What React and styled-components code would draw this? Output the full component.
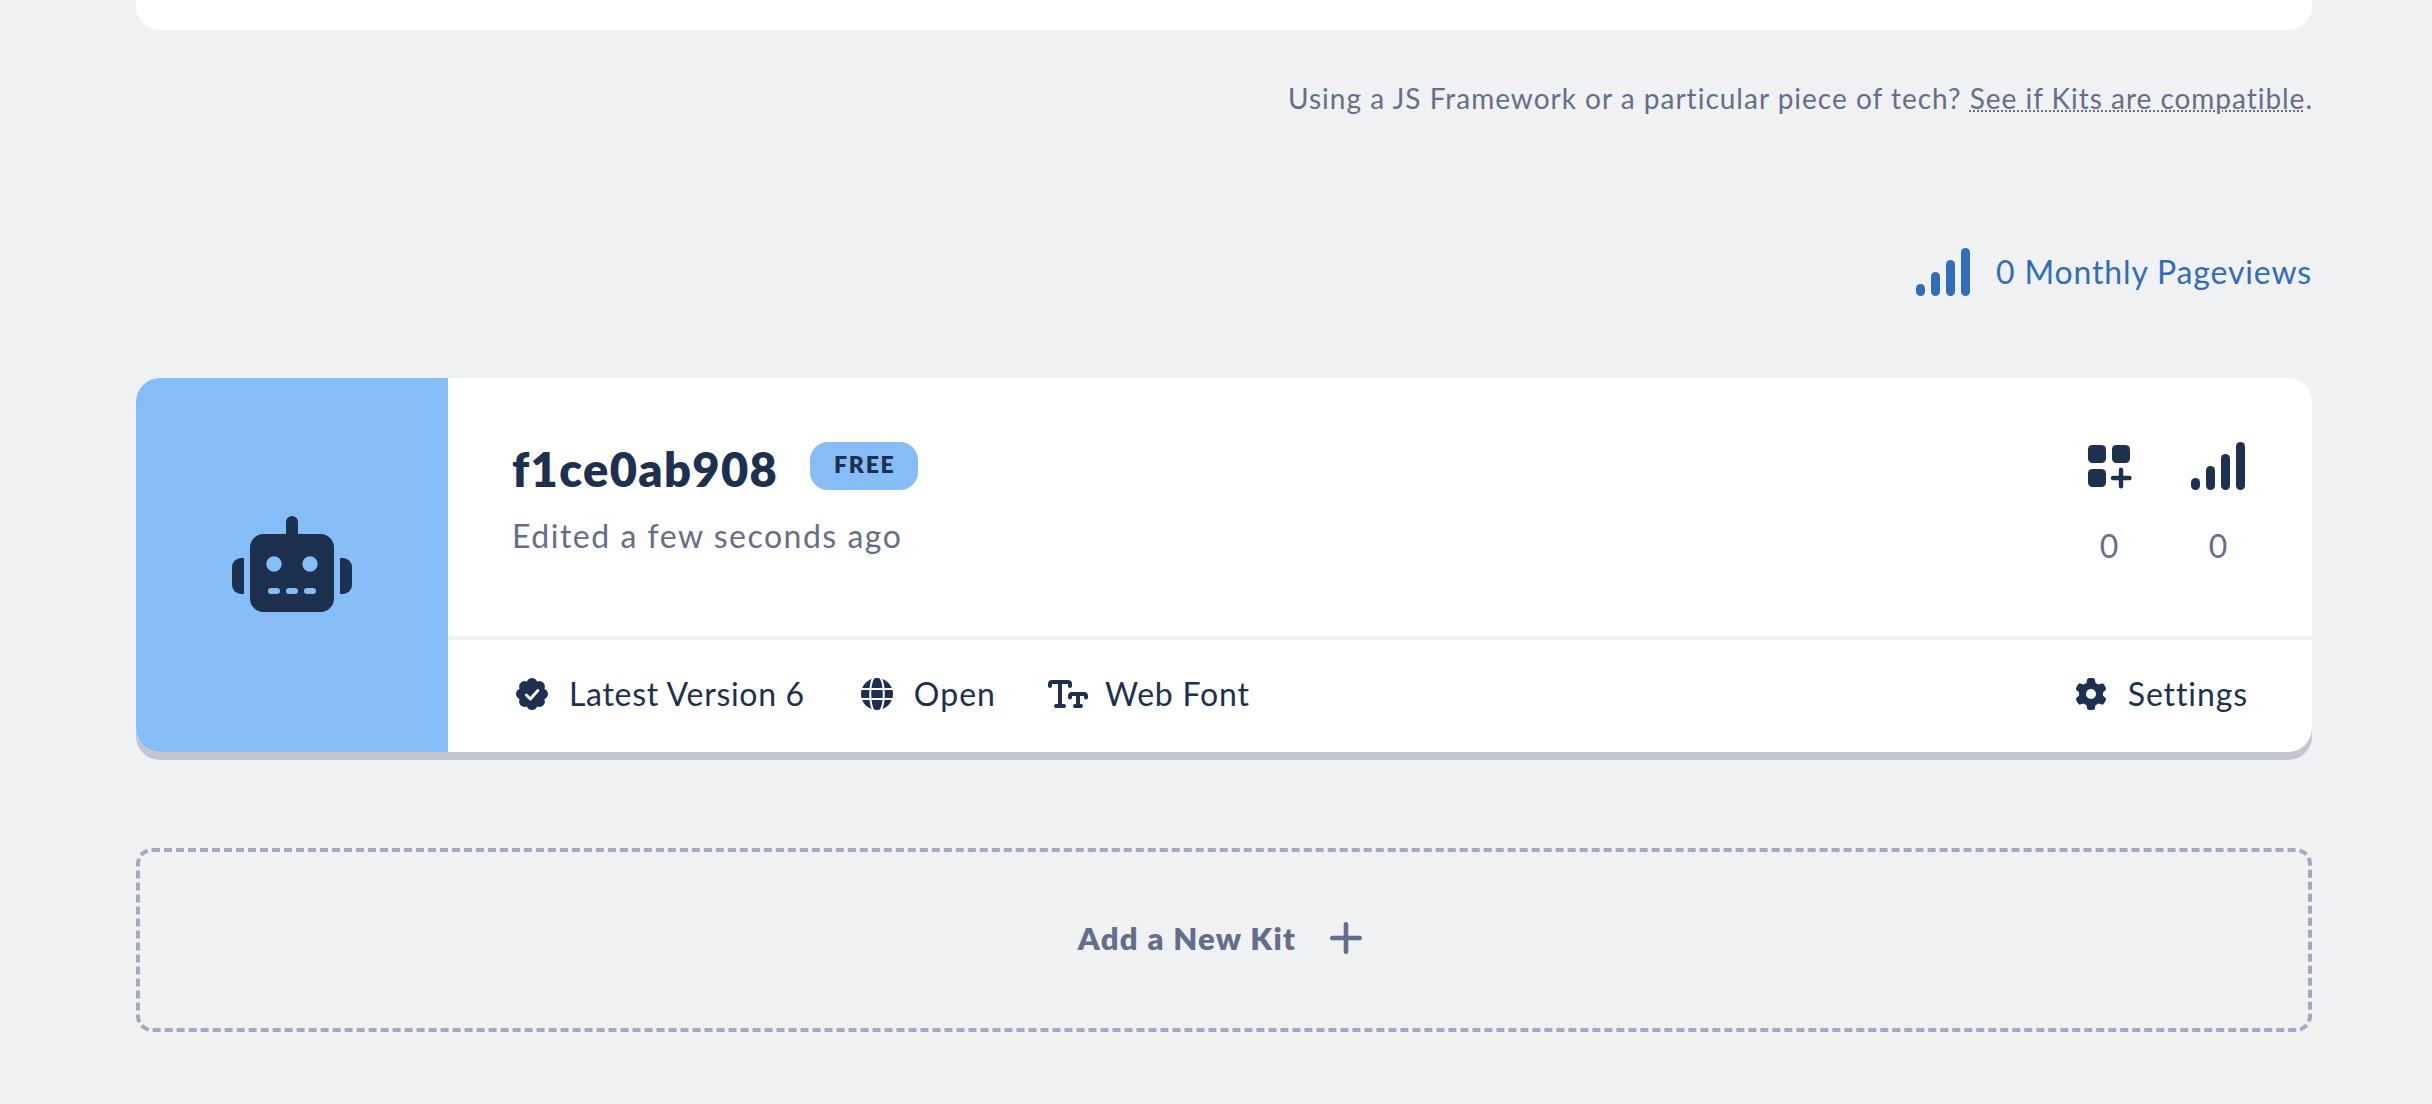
import React from 'react';
import styled, { createGlobalStyle, ThemeProvider } from 'styled-components';
import { FaGear } from 'react-icons/fa6';

const theme = {
  page: '#eff1f3',
  surface: '#ffffff',
  navy: '#1e3050',
  slate: '#646e8b',
  muted: '#a4aaba',
  shadow: '#c3c6d0',
  link: '#326dba',
  sky: '#86bdf7',
};

const GlobalStyle = createGlobalStyle`
  *, *::before, *::after { box-sizing: border-box; }
  body {
    margin: 0;
    background: ${theme.page};
    font-family: Lato, "Open Sans", sans-serif;
    font-size: 32px;
    line-height: 48px;
    color: ${theme.navy};
  }
`;

const Page = styled.main`
  display: flex;
  flex-direction: column;
  width: 2176px;
  height: 1104px;
  margin-left: 136px;
  overflow: hidden;
`;

const PreviousPanel = styled.div`
  flex: none;
  height: 30px;
  border-radius: 0 0 24px 24px;
  background: ${({ theme }) => theme.surface};
`;

const Hint = styled.p`
  margin: 48px -1px 0 0;
  font-size: 28px;
  line-height: 40px;
  letter-spacing: 1px;
  text-align: right;
  white-space: nowrap;
  color: ${({ theme }) => theme.slate};
`;

const HintLink = styled.a`
  letter-spacing: 0.97px;
  color: inherit;
  text-decoration: underline dotted 2px;
  text-underline-offset: 1px;
`;

const Pageviews = styled.a`
  display: flex;
  align-items: center;
  align-self: flex-end;
  gap: 23px;
  margin-top: 130px;
  letter-spacing: 0.85px;
  white-space: nowrap;
  color: ${({ theme }) => theme.link};
`;

const KitCard = styled.article`
  display: flex;
  flex: none;
  height: 374px;
  margin-top: 82px;
  border-radius: 24px;
  background: ${({ theme }) => theme.surface};
  box-shadow: 0 8px 0 ${({ theme }) => theme.shadow};
`;

const KitEmblem = styled.div`
  display: flex;
  flex: none;
  align-items: center;
  justify-content: center;
  width: 312px;
  padding-bottom: 2px;
  border-radius: 24px 0 0 24px;
  background: ${({ theme }) => theme.sky};
`;

const KitContent = styled.div`
  display: flex;
  flex: 1;
  flex-direction: column;
`;

const KitOverview = styled.header`
  display: flex;
  flex: 1;
  justify-content: space-between;
  padding: 64px 64px 0;
`;

const TitleRow = styled.div`
  display: flex;
  align-items: flex-start;
  gap: 32px;
  height: 54px;
`;

const KitName = styled.h2`
  margin: 0;
  font-size: 47px;
  font-weight: 800;
  line-height: 54px;
  letter-spacing: 1.35px;
`;

const PlanBadge = styled.span`
  height: 48px;
  padding: 0 23px 0 24px;
  border-radius: 18px;
  font-size: 23px;
  font-weight: 800;
  line-height: 45px;
  letter-spacing: 1.7px;
  background: ${({ theme }) => theme.sky};
`;

const EditedNote = styled.p`
  margin: 16px 0 0;
  letter-spacing: 1.51px;
  color: ${({ theme }) => theme.slate};
`;

const Stats = styled.div`
  display: flex;
  gap: 58px;
`;

const Stat = styled.div`
  display: flex;
  flex-direction: column;
  align-items: center;
  gap: 32px;
`;

const StatValue = styled.span`
  color: ${({ theme }) => theme.slate};
`;

const KitFooter = styled.footer`
  display: flex;
  align-items: center;
  gap: 52px;
  height: 116px;
  padding: 0 64px 4px;
  border-top: 4px solid ${({ theme }) => theme.page};
`;

const FooterItem = styled.span`
  display: flex;
  align-items: center;
  gap: 17px;
  margin-left: ${({ $end }) => ($end ? 'auto' : '0')};
  letter-spacing: ${({ $tracking }) => $tracking}px;
  white-space: nowrap;
`;

const IconSlot = styled.span`
  display: flex;
  align-items: center;
  justify-content: center;
  width: 40px;
  height: 32px;
`;

const AddKit = styled.button`
  display: flex;
  flex: none;
  align-items: center;
  justify-content: center;
  gap: 34px;
  height: 184px;
  margin-top: 96px;
  padding: 0 8px 4px 0;
  border: 4px dashed ${({ theme }) => theme.muted};
  border-radius: 16px;
  background: none;
  font: inherit;
  font-size: 31px;
  font-weight: 800;
  letter-spacing: 1.3px;
  color: ${({ theme }) => theme.slate};
`;

const Glyph = styled.svg`
  display: block;
  flex: none;
  overflow: visible;
  fill: currentColor;
`;

const LineGlyph = styled(Glyph)`
  fill: none;
  stroke: currentColor;
  stroke-linecap: round;
  stroke-linejoin: round;
`;

function SignalIcon() {
  return (
    <Glyph width="60" height="48" viewBox="0 0 60 48">
      {[12, 24, 36, 48].map((h, i) => (
        <rect key={h} x={3 + i * 15} y={48 - h} width="9" height={h} rx="4.5" />
      ))}
    </Glyph>
  );
}

function GridPlusIcon() {
  return (
    <Glyph width="42" height="48" viewBox="0 0 42 48">
      <rect x="0" y="3" width="18" height="18" rx="4.5" />
      <rect x="24" y="3" width="18" height="18" rx="4.5" />
      <rect x="0" y="27" width="18" height="18" rx="4.5" />
      <path d="M25 36h16.5M33 27.8v16.4" stroke="currentColor" strokeWidth="4.4" strokeLinecap="round" />
    </Glyph>
  );
}

function RobotIcon() {
  return (
    <Glyph width="120" height="96" viewBox="0 0 120 96">
      <path
        fillRule="evenodd"
        d="M54 18V6a6 6 0 0 1 12 0v12h22.5A13.5 13.5 0 0 1 102 31.500V82.500A13.500 13.500 0 0 1 88.500 96H31.500A13.500 13.500 0 0 1 18 82.500V31.500A13.500 13.500 0 0 1 31.500 18Z
           M34.300 48a7.700 7.700 0 1 0 15.400 0a7.700 7.700 0 1 0 -15.400 0Z
           M70.300 48a7.700 7.700 0 1 0 15.400 0a7.700 7.700 0 1 0 -15.400 0Z
           M39 72a3 3 0 0 0 0 6h6a3 3 0 0 0 0-6Z
           M57 72a3 3 0 0 0 0 6h6a3 3 0 0 0 0-6Z
           M75 72a3 3 0 0 0 0 6h6a3 3 0 0 0 0-6Z"
      />
      <path d="M12 42H9a9 9 0 0 0-9 9v18a9 9 0 0 0 9 9h3Z" />
      <path d="M108 42h3a9 9 0 0 1 9 9v18a9 9 0 0 1-9 9h-3Z" />
    </Glyph>
  );
}

function VerifiedIcon() {
  const lobes = Array.from({ length: 8 }, (_, i) => (i * Math.PI) / 4);
  return (
    <Glyph width="32" height="32" viewBox="0 0 32 32">
      <circle cx="16" cy="16" r="13.3" />
      {lobes.map((a) => (
        <circle key={a} cx={16 + 10.6 * Math.cos(a)} cy={16 + 10.6 * Math.sin(a)} r="5.4" />
      ))}
      <path d="M10.300 17l4 4 7.600-8.500" fill="none" stroke="#fff" strokeWidth="2.900" strokeLinecap="round" strokeLinejoin="round" />
    </Glyph>
  );
}

function GlobeIcon() {
  return (
    <Glyph width="32" height="32" viewBox="0 0 32 32">
      <circle cx="16" cy="16" r="16" />
      <g fill="none" stroke="#fff" strokeWidth="2">
        <path d="M0 11h32M0 21h32" />
        <path d="M13 -1C8 5 8 27 13 33M19 -1C24 5 24 27 19 33" />
      </g>
    </Glyph>
  );
}

function TextSizeIcon() {
  return (
    <LineGlyph width="40" height="32" viewBox="0 0 40 32" strokeWidth="4">
      <path d="M2 8V6a2 2 0 0 1 2-2h16a2 2 0 0 1 2 2v2M12 4v24M8 28h8" />
      <path d="M22 19.500V18a2 2 0 0 1 2-2h12a2 2 0 0 1 2 2v1.500M30 16v12M27 28h6" />
    </LineGlyph>
  );
}

function PlusIcon() {
  return (
    <LineGlyph width="32" height="32" viewBox="0 0 32 32" strokeWidth="4.6">
      <path d="M16 2.300v27.400M2.300 16h27.400" />
    </LineGlyph>
  );
}

export default function App() {
  return (
    <ThemeProvider theme={theme}>
      <GlobalStyle />
      <Page>
        <PreviousPanel />
        <Hint>
          Using a JS Framework or a particular piece of tech?{' '}
          <HintLink>See if Kits are compatible</HintLink>.
        </Hint>
        <Pageviews>
          <SignalIcon />
          0 Monthly Pageviews
        </Pageviews>
        <KitCard>
          <KitEmblem>
            <RobotIcon />
          </KitEmblem>
          <KitContent>
            <KitOverview>
              <div>
                <TitleRow>
                  <KitName>f1ce0ab908</KitName>
                  <PlanBadge>FREE</PlanBadge>
                </TitleRow>
                <EditedNote>Edited a few seconds ago</EditedNote>
              </div>
              <Stats>
                <Stat>
                  <GridPlusIcon />
                  <StatValue>0</StatValue>
                </Stat>
                <Stat>
                  <SignalIcon />
                  <StatValue>0</StatValue>
                </Stat>
              </Stats>
            </KitOverview>
            <KitFooter>
              <FooterItem $tracking={0.69}>
                <IconSlot><VerifiedIcon /></IconSlot>
                Latest Version 6
              </FooterItem>
              <FooterItem $tracking={1.05}>
                <IconSlot><GlobeIcon /></IconSlot>
                Open
              </FooterItem>
              <FooterItem $tracking={0.8}>
                <IconSlot><TextSizeIcon /></IconSlot>
                Web Font
              </FooterItem>
              <FooterItem $tracking={0.9} $end>
                <IconSlot><FaGear size={32} /></IconSlot>
                Settings
              </FooterItem>
            </KitFooter>
          </KitContent>
        </KitCard>
        <AddKit type="button">
          Add a New Kit
          <PlusIcon />
        </AddKit>
      </Page>
    </ThemeProvider>
  );
}
